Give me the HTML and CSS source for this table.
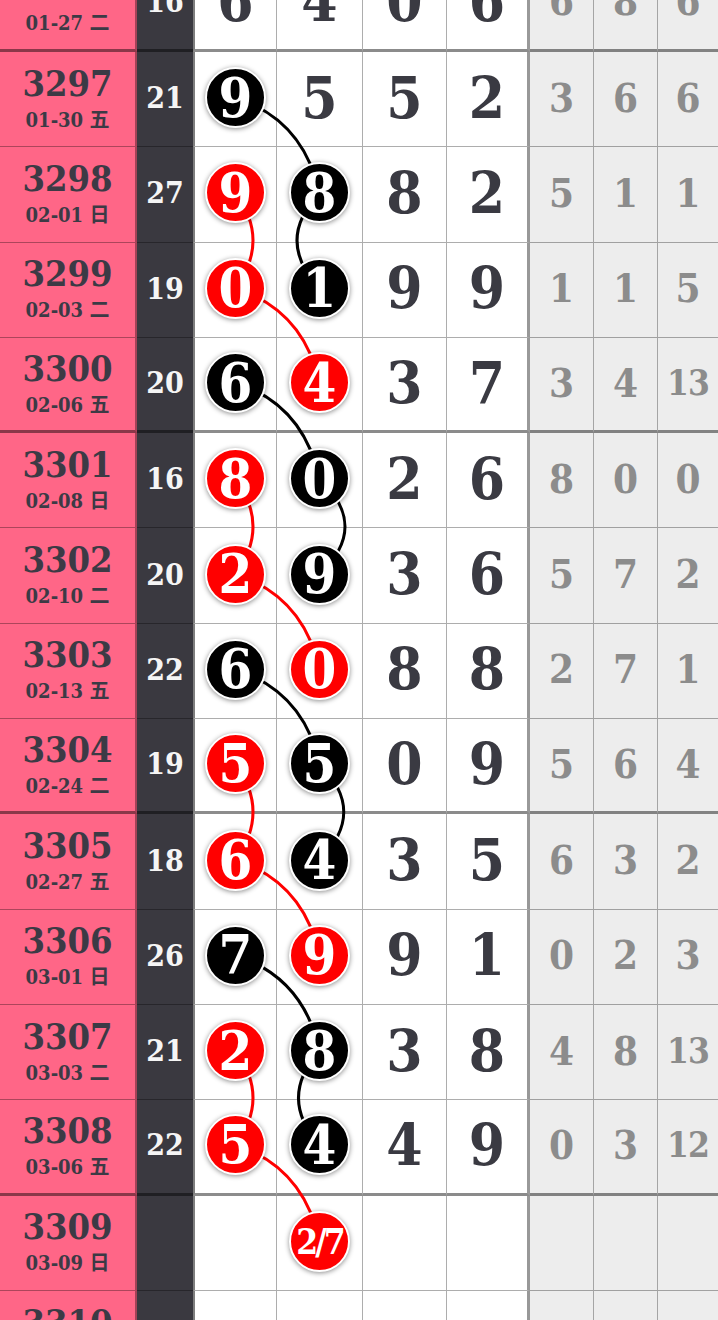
FILE: index.html
```html
<!DOCTYPE html>
<html lang="zh">
<head>
<meta charset="utf-8">
<title>走势图</title>
<link rel="stylesheet" href="styles.css">
</head>
<body>
<div class="board">
  <svg class="links" width="718" height="1320" viewBox="0 0 718 1320">
    <g fill="none" stroke-width="3" stroke-linecap="round">
      <path class="lk" d="M235.5 97.65 Q303.5 119.65 319.5 192.95"/>
      <path class="lk" d="M319.5 192.95 Q274.5 240.6 319.5 288.25"/>
      <path class="lk" d="M235.5 382.55 Q303.5 404.55 319.5 478.85"/>
      <path class="lk" d="M319.5 478.85 Q370.5 526.5 319.5 574.15"/>
      <path class="lk" d="M235.5 669.45 Q303.5 691.45 319.5 763.75"/>
      <path class="lk" d="M319.5 763.75 Q368 811.9 319.5 860.05"/>
      <path class="lk" d="M235.5 955.35 Q303.5 977.35 319.5 1050.65"/>
      <path class="lk" d="M319.5 1050.65 Q277.5 1097.8 319.5 1144.95"/>
      <path class="lr" d="M235.5 192.95 Q270.5 240.6 235.5 288.25"/>
      <path class="lr" d="M235.5 288.25 Q303.5 310.25 319.5 382.55"/>
      <path class="lr" d="M235.5 478.85 Q270.5 526.5 235.5 574.15"/>
      <path class="lr" d="M235.5 574.15 Q303.5 596.15 319.5 669.45"/>
      <path class="lr" d="M235.5 763.75 Q270.5 811.9 235.5 860.05"/>
      <path class="lr" d="M235.5 860.05 Q303.5 882.05 319.5 955.35"/>
      <path class="lr" d="M235.5 1050.65 Q270.5 1097.8 235.5 1144.95"/>
      <path class="lr" d="M235.5 1144.95 Q303.5 1166.95 319.5 1241.25"/>
    </g>
  </svg>

  <div class="row thick">
    <div class="c issue"><span class="no">3296</span><span class="date">01-27 <span class="wk">二</span></span></div>
    <div class="c sum">16</div>
    <div class="c w c1"><span class="n">6</span></div>
    <div class="c w c2"><span class="n">4</span></div>
    <div class="c w c3"><span class="n">0</span></div>
    <div class="c w c4"><span class="n">6</span></div>
    <div class="c g"><span class="m">6</span></div>
    <div class="c g"><span class="m">8</span></div>
    <div class="c g last"><span class="m">6</span></div>
  </div>

  <div class="row">
    <div class="c issue"><span class="no">3297</span><span class="date">01-30 <span class="wk">五</span></span></div>
    <div class="c sum">21</div>
    <div class="c w c1"><span class="ball blk">9</span></div>
    <div class="c w c2"><span class="n">5</span></div>
    <div class="c w c3"><span class="n">5</span></div>
    <div class="c w c4"><span class="n">2</span></div>
    <div class="c g"><span class="m">3</span></div>
    <div class="c g"><span class="m">6</span></div>
    <div class="c g last"><span class="m">6</span></div>
  </div>

  <div class="row">
    <div class="c issue"><span class="no">3298</span><span class="date">02-01 <span class="wk">日</span></span></div>
    <div class="c sum">27</div>
    <div class="c w c1"><span class="ball red">9</span></div>
    <div class="c w c2"><span class="ball blk">8</span></div>
    <div class="c w c3"><span class="n">8</span></div>
    <div class="c w c4"><span class="n">2</span></div>
    <div class="c g"><span class="m">5</span></div>
    <div class="c g"><span class="m">1</span></div>
    <div class="c g last"><span class="m">1</span></div>
  </div>

  <div class="row">
    <div class="c issue"><span class="no">3299</span><span class="date">02-03 <span class="wk">二</span></span></div>
    <div class="c sum">19</div>
    <div class="c w c1"><span class="ball red">0</span></div>
    <div class="c w c2"><span class="ball blk">1</span></div>
    <div class="c w c3"><span class="n">9</span></div>
    <div class="c w c4"><span class="n">9</span></div>
    <div class="c g"><span class="m">1</span></div>
    <div class="c g"><span class="m">1</span></div>
    <div class="c g last"><span class="m">5</span></div>
  </div>

  <div class="row thick">
    <div class="c issue"><span class="no">3300</span><span class="date">02-06 <span class="wk">五</span></span></div>
    <div class="c sum">20</div>
    <div class="c w c1"><span class="ball blk">6</span></div>
    <div class="c w c2"><span class="ball red">4</span></div>
    <div class="c w c3"><span class="n">3</span></div>
    <div class="c w c4"><span class="n">7</span></div>
    <div class="c g"><span class="m">3</span></div>
    <div class="c g"><span class="m">4</span></div>
    <div class="c g last"><span class="m sm">13</span></div>
  </div>

  <div class="row">
    <div class="c issue"><span class="no">3301</span><span class="date">02-08 <span class="wk">日</span></span></div>
    <div class="c sum">16</div>
    <div class="c w c1"><span class="ball red">8</span></div>
    <div class="c w c2"><span class="ball blk">0</span></div>
    <div class="c w c3"><span class="n">2</span></div>
    <div class="c w c4"><span class="n">6</span></div>
    <div class="c g"><span class="m">8</span></div>
    <div class="c g"><span class="m">0</span></div>
    <div class="c g last"><span class="m">0</span></div>
  </div>

  <div class="row">
    <div class="c issue"><span class="no">3302</span><span class="date">02-10 <span class="wk">二</span></span></div>
    <div class="c sum">20</div>
    <div class="c w c1"><span class="ball red">2</span></div>
    <div class="c w c2"><span class="ball blk">9</span></div>
    <div class="c w c3"><span class="n">3</span></div>
    <div class="c w c4"><span class="n">6</span></div>
    <div class="c g"><span class="m">5</span></div>
    <div class="c g"><span class="m">7</span></div>
    <div class="c g last"><span class="m">2</span></div>
  </div>

  <div class="row">
    <div class="c issue"><span class="no">3303</span><span class="date">02-13 <span class="wk">五</span></span></div>
    <div class="c sum">22</div>
    <div class="c w c1"><span class="ball blk">6</span></div>
    <div class="c w c2"><span class="ball red">0</span></div>
    <div class="c w c3"><span class="n">8</span></div>
    <div class="c w c4"><span class="n">8</span></div>
    <div class="c g"><span class="m">2</span></div>
    <div class="c g"><span class="m">7</span></div>
    <div class="c g last"><span class="m">1</span></div>
  </div>

  <div class="row thick">
    <div class="c issue"><span class="no">3304</span><span class="date">02-24 <span class="wk">二</span></span></div>
    <div class="c sum">19</div>
    <div class="c w c1"><span class="ball red">5</span></div>
    <div class="c w c2"><span class="ball blk">5</span></div>
    <div class="c w c3"><span class="n">0</span></div>
    <div class="c w c4"><span class="n">9</span></div>
    <div class="c g"><span class="m">5</span></div>
    <div class="c g"><span class="m">6</span></div>
    <div class="c g last"><span class="m">4</span></div>
  </div>

  <div class="row">
    <div class="c issue"><span class="no">3305</span><span class="date">02-27 <span class="wk">五</span></span></div>
    <div class="c sum">18</div>
    <div class="c w c1"><span class="ball red">6</span></div>
    <div class="c w c2"><span class="ball blk">4</span></div>
    <div class="c w c3"><span class="n">3</span></div>
    <div class="c w c4"><span class="n">5</span></div>
    <div class="c g"><span class="m">6</span></div>
    <div class="c g"><span class="m">3</span></div>
    <div class="c g last"><span class="m">2</span></div>
  </div>

  <div class="row">
    <div class="c issue"><span class="no">3306</span><span class="date">03-01 <span class="wk">日</span></span></div>
    <div class="c sum">26</div>
    <div class="c w c1"><span class="ball blk">7</span></div>
    <div class="c w c2"><span class="ball red">9</span></div>
    <div class="c w c3"><span class="n">9</span></div>
    <div class="c w c4"><span class="n">1</span></div>
    <div class="c g"><span class="m">0</span></div>
    <div class="c g"><span class="m">2</span></div>
    <div class="c g last"><span class="m">3</span></div>
  </div>

  <div class="row">
    <div class="c issue"><span class="no">3307</span><span class="date">03-03 <span class="wk">二</span></span></div>
    <div class="c sum">21</div>
    <div class="c w c1"><span class="ball red">2</span></div>
    <div class="c w c2"><span class="ball blk">8</span></div>
    <div class="c w c3"><span class="n">3</span></div>
    <div class="c w c4"><span class="n">8</span></div>
    <div class="c g"><span class="m">4</span></div>
    <div class="c g"><span class="m">8</span></div>
    <div class="c g last"><span class="m sm">13</span></div>
  </div>

  <div class="row thick">
    <div class="c issue"><span class="no">3308</span><span class="date">03-06 <span class="wk">五</span></span></div>
    <div class="c sum">22</div>
    <div class="c w c1"><span class="ball red">5</span></div>
    <div class="c w c2"><span class="ball blk">4</span></div>
    <div class="c w c3"><span class="n">4</span></div>
    <div class="c w c4"><span class="n">9</span></div>
    <div class="c g"><span class="m">0</span></div>
    <div class="c g"><span class="m">3</span></div>
    <div class="c g last"><span class="m sm">12</span></div>
  </div>

  <div class="row">
    <div class="c issue"><span class="no">3309</span><span class="date">03-09 <span class="wk">日</span></span></div>
    <div class="c sum"></div>
    <div class="c w c1"></div>
    <div class="c w c2"><span class="ball red frac">2/7</span></div>
    <div class="c w c3"></div>
    <div class="c w c4"></div>
    <div class="c g"></div>
    <div class="c g"></div>
    <div class="c g last"></div>
  </div>

  <div class="row">
    <div class="c issue"><span class="no">3310</span><span class="date">03-11 <span class="wk">二</span></span></div>
    <div class="c sum"></div>
    <div class="c w c1"></div>
    <div class="c w c2"></div>
    <div class="c w c3"></div>
    <div class="c w c4"></div>
    <div class="c g"></div>
    <div class="c g"></div>
    <div class="c g last"></div>
  </div>
</div>
</body>
</html>
```

FILE: styles.css
```css
html, body {
  margin: 0;
  padding: 0;
  background: #ffffff;
}

body {
  width: 718px;
  height: 1320px;
  overflow: hidden;
  font-family: "DejaVu Serif Condensed", "DejaVu Serif", "Noto Sans CJK SC", serif;
  font-weight: bold;
}

.board {
  position: relative;
  margin-top: -43.3px;
}

.links {
  position: absolute;
  top: 43.3px;
  left: 0;
  z-index: 1;
  pointer-events: none;
}

.lk { stroke: #000000; }
.lr { stroke: #ff0000; }

.row {
  display: grid;
  grid-template-columns: 137px 56px 84px 86px 84px 83px 64px 64px 1fr;
  height: 95.3px;
}

.c {
  box-sizing: border-box;
  display: flex;
  align-items: center;
  justify-content: center;
  min-width: 0;
  padding-bottom: 3px;
  border-bottom: 1px solid rgba(0, 0, 0, 0.32);
}

.row.thick .c {
  border-bottom: 3px solid rgba(0, 0, 0, 0.45);
}

.issue {
  flex-direction: column;
  background: #ff6687;
  color: #3c3a45;
  border-right: 2px solid rgba(0, 0, 0, 0.35);
}

.no {
  font-size: 36px;
  line-height: 38px;
}

.date {
  margin-top: 5px;
  font-size: 20px;
  line-height: 24px;
}

.wk {
  font-family: "Noto Sans CJK SC", sans-serif;
  font-weight: bold;
}

.sum {
  background: #3a3940;
  color: #f5f5f5;
  font-size: 30px;
}

.w {
  background: #ffffff;
  border-right: 1px solid rgba(0, 0, 0, 0.32);
}

.c1 {
  border-left: 2px solid rgba(0, 0, 0, 0.5);
}

.c4 {
  border-right: 3px solid rgba(0, 0, 0, 0.4);
}

.g {
  background: #ededed;
  border-right: 1px solid rgba(0, 0, 0, 0.3);
}

.g.last {
  border-right: none;
}

.n {
  font-size: 58px;
  line-height: 1;
  color: #3a3a42;
}

.m {
  font-size: 40px;
  line-height: 1;
  color: #8c8c8c;
}

.m.sm {
  font-size: 35px;
  letter-spacing: -1px;
}

.ball {
  position: relative;
  z-index: 2;
  box-sizing: border-box;
  width: 61px;
  height: 61px;
  border-radius: 50%;
  border: 2px solid #ffffff;
  box-shadow: 0 1px 5px rgba(0, 0, 0, 0.45);
  display: flex;
  align-items: center;
  justify-content: center;
  color: #ffffff;
  font-size: 54px;
  line-height: 1;
}

.blk { background: #000000; }
.red { background: #ff0000; }

.ball.frac {
  font-size: 35px;
  letter-spacing: -3px;
}
```
